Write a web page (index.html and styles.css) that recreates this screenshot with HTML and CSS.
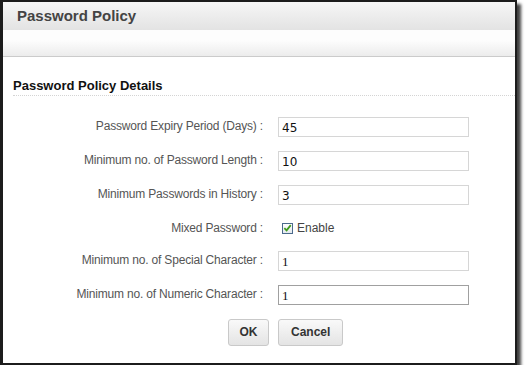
FILE: index.html
```html
<!DOCTYPE html>
<html lang="en">
<head>
    <meta charset="UTF-8">
    <title>Password Policy</title>
    <link rel="stylesheet" href="styles.css">
</head>
<body>
    <div class="dialog">
        <div class="dialogTitle">Password Policy</div>
        <div class="toolbar"></div>
        <div class="content">
            <div class="sectionTitle">Password Policy Details</div>
            <div class="form">
                <label class="fieldLabel">Password Expiry Period (Days) :</label>
                <input class="field" type="text" value="45">
                <label class="fieldLabel">Minimum no. of Password Length :</label>
                <input class="field" type="text" value="10">
                <label class="fieldLabel">Minimum Passwords in History :</label>
                <input class="field" type="text" value="3">
                <label class="fieldLabel checkRow">Mixed Password :</label>
                <div class="checkField">
                    <span class="checkBox">
                        <svg width="10" height="10" viewBox="0 0 10 10"><path d="M1.5 5.2 L4 7.6 L8.6 1.8" fill="none" stroke="#3f9b1e" stroke-width="2"/></svg>
                    </span>
                    <span class="checkText">Enable</span>
                </div>
                <label class="fieldLabel">Minimum no. of Special Character :</label>
                <input class="field serif" type="text" value="1">
                <label class="fieldLabel">Minimum no. of Numeric Character :</label>
                <input class="field serif focused" type="text" value="1">
            </div>
            <div class="actionRow">
                <div class="button okButton">OK</div>
                <div class="button">Cancel</div>
            </div>
        </div>
    </div>
</body>
</html>
```

FILE: styles.css
```css
* {
    margin: 0;
    padding: 0;
    box-sizing: border-box;
}
body {
    background-color: white;
    font-family: 'Liberation Sans', Arial, sans-serif;
    font-size: 12px;
    color: #555;
}
.dialog {
    width: 517px;
    height: 365px;
    border: 2px solid #1c1c1c;
    border-left-width: 3px;
    background-color: white;
    box-shadow: 4px 4px 3px rgba(0, 0, 0, 0.75);
    display: flex;
    flex-direction: column;
}
.dialogTitle {
    height: 28px;
    padding-left: 14px;
    line-height: 28px;
    font-size: 15px;
    font-weight: bold;
    color: #444;
    background: linear-gradient(#f6f6f6, #e3e3e3);
}
.toolbar {
    height: 27px;
    background: linear-gradient(#fdfdfd 40%, #ececec);
    border-bottom: 1px solid #cbcbcb;
}
.content {
    flex: 1;
    padding: 20px 0 0 10px;
}
.sectionTitle {
    height: 19px;
    line-height: 17px;
    font-size: 13px;
    font-weight: bold;
    color: #111;
    border-bottom: 1px dotted #d4d4d4;
}
.form {
    display: grid;
    grid-template-columns: 250px 191px;
    column-gap: 15px;
    row-gap: 14px;
    align-items: center;
    margin-top: 21px;
}
.fieldLabel {
    text-align: right;
    padding-bottom: 3px;
    white-space: nowrap;
    letter-spacing: -0.18px;
}
.checkRow {
    padding-bottom: 0;
}
.field {
    width: 191px;
    height: 20px;
    border: 1px solid #d6d6d6;
    padding: 2px 3px 0;
    font-family: 'DejaVu Sans', sans-serif;
    font-size: 12px;
    color: #111;
    outline: none;
}
.field.serif {
    font-family: 'Liberation Serif', serif;
    font-size: 13px;
}
.field.focused {
    border-color: #a0a0a0;
}
.checkField {
    height: 18px;
    display: flex;
    align-items: center;
    padding-left: 4px;
}
.checkBox {
    width: 11px;
    height: 11px;
    border: 1px solid #4b6a8c;
    background: linear-gradient(#ffffff, #e4e9ee);
    display: flex;
    align-items: center;
    justify-content: center;
    margin-right: 4px;
}
.checkText {
    color: #444;
}
.actionRow {
    display: flex;
    gap: 9px;
    padding-left: 215px;
    margin-top: 14px;
}
.button {
    height: 27px;
    padding: 0 12px;
    line-height: 25px;
    border: 1px solid #c9c9c9;
    border-radius: 3px;
    background: linear-gradient(#f9f9f9, #e4e4e4);
    font-weight: bold;
    color: #333;
}
.okButton {
    width: 41px;
    text-align: center;
    padding: 0;
}
```
